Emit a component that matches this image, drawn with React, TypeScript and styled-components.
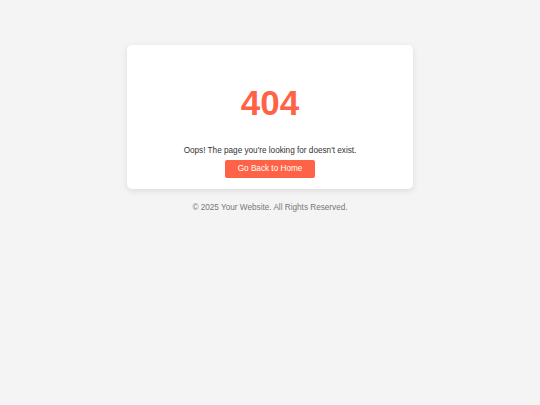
import styled, { createGlobalStyle } from 'styled-components'

const GlobalStyle = createGlobalStyle`
	html, body {
		margin: 0;
		padding: 0;
		background: #f4f4f4;
		font-family: 'Liberation Sans', Arial, sans-serif;
		color: #333;
	}
`

export default function App() {
	return (
		<>
			<GlobalStyle />
			<Page>
				<Card>
					<Code>404</Code>
					<Message>Oops! The page you're looking for doesn't exist.</Message>
					<HomeButton href="#">Go Back to Home</HomeButton>
				</Card>
				<Footer>&copy; 2025 Your Website. All Rights Reserved.</Footer>
			</Page>
		</>
	)
}

const Page = styled.div`
	min-height: 405px;
	display: flex;
	flex-direction: column;
	align-items: center;
	padding-top: 45px;
	box-sizing: border-box;
`
const Card = styled.div`
	width: 286px;
	box-sizing: border-box;
	padding: 12px 12px 11px;
	background: #fff;
	border-radius: 5px;
	box-shadow: 0 2px 6px rgba(0, 0, 0, 0.1);
	text-align: center;
	display: flex;
	flex-direction: column;
	align-items: center;
`
const Code = styled.h1`
	margin: 26px 0 0;
	font-size: 35px;
	line-height: 40px;
	font-weight: 700;
	color: #ff6347;
`
const Message = styled.p`
	margin: 23px 0 4px;
	font-size: 8.2px;
	line-height: 10px;
	color: #333;
`
const HomeButton = styled.a`
	display: inline-block;
	width: 90px;
	height: 18px;
	line-height: 18px;
	font-size: 8.2px;
	color: #fff;
	background: #ff6347;
	border-radius: 2px;
	text-decoration: none;
`
const Footer = styled.p`
	margin: 14px 0 0;
	font-size: 8.2px;
	line-height: 10px;
	color: #777;
`
